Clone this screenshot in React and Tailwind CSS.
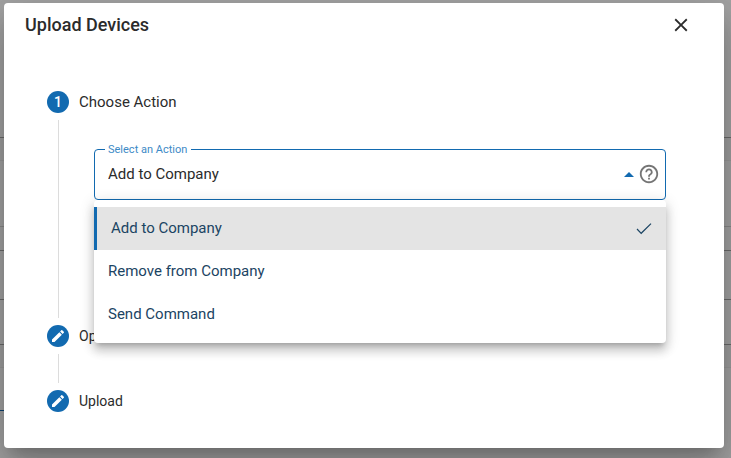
import React, { useState } from 'react';
import { MdClose, MdHelpOutline } from 'react-icons/md';

const ACTIONS = ['Add to Company', 'Remove from Company', 'Send Command'];

const PencilIcon = () => (
  <svg viewBox="0 0 24 24" aria-hidden="true" className="h-4 w-4 fill-current">
    <path d="M3 17.25V21h3.75L17.81 9.94l-3.75-3.75L3 17.25zM20.71 7.04a1 1 0 0 0 0-1.41l-2.34-2.34a1 1 0 0 0-1.41 0l-1.83 1.83 3.75 3.75 1.83-1.83z" />
  </svg>
);

// Dimmed table rows behind the dialog
const PageBehind = () => (
  <div aria-hidden="true" className="min-h-screen bg-[#a4a4a4]">
    <div className="h-[138px] border-b border-[#6b6b6b]" />
    <div className="h-[23px] border-b border-[#9a9a9a] bg-[#a0a0a0]" />
    <div className="h-[66px] border-b border-[#8a8a8a]" />
    <div className="h-6 border-b border-[#6b6b6b]" />
    <div className="h-[49px] border-b border-[#6b6b6b]" />
    <div className="h-[45px] border-b border-[#6b6b6b]" />
    <div className="h-[23px] border-b border-[#9a9a9a] bg-[#a0a0a0]" />
    <div className="h-[43px] w-1/2 border-b border-[#0c4473]" />
  </div>
);

const Step = ({ icon, label, labelClass, children }) => (
  <li>
    <div className="flex h-9 items-center gap-[10px]">
      <span className="flex h-[22px] w-[22px] shrink-0 items-center justify-center rounded-full bg-[#126ab0] text-sm font-medium text-white">
        {icon}
      </span>
      <span className={labelClass}>{label}</span>
    </div>
    {children}
  </li>
);

const ActionSelect = () => {
  const [action, setAction] = useState(ACTIONS[0]);
  const [isOpen, setIsOpen] = useState(true);

  const choose = (value) => {
    setAction(value);
    setIsOpen(false);
  };

  return (
    <div className="relative">
      <fieldset className="rounded border border-[#126ab0] pr-[5px] pb-2 pl-[10px]">
        <legend className="pr-1 pl-[3px] text-[11px] leading-[15px] text-[#3d8ac6]">
          <label htmlFor="action">Select an Action</label>
        </legend>
        <div className="flex h-[34px] items-center gap-1 pl-[3px]">
          <select
            id="action"
            value={action}
            onChange={(e) => choose(e.target.value)}
            className="min-w-0 flex-1 appearance-none bg-transparent text-[15px] text-[#2b2b2b] outline-none"
          >
            {ACTIONS.map((item) => (
              <option key={item}>{item}</option>
            ))}
          </select>
          <button type="button" aria-label="Toggle actions" onClick={() => setIsOpen(!isOpen)}>
            <svg viewBox="0 0 10 5" className="h-[5px] w-[10px] fill-[#126ab0]">
              <path d="M0 5 5 0l5 5z" />
            </svg>
          </button>
          <button type="button" aria-label="Help" className="text-[#757575]">
            <MdHelpOutline className="h-[22px] w-[22px]" />
          </button>
        </div>
      </fieldset>

      {isOpen && (
        <ul
          role="listbox"
          aria-label="Select an Action"
          className="absolute top-full right-0 left-0 z-10 rounded bg-white py-[7px] shadow-[0_5px_5px_-3px_rgba(0,0,0,0.2),0_8px_10px_1px_rgba(0,0,0,0.14),0_3px_14px_2px_rgba(0,0,0,0.12)]"
        >
          {ACTIONS.map((item) => (
            <li key={item} role="option" aria-selected={item === action}>
              <button
                type="button"
                onClick={() => choose(item)}
                className={`flex h-[43px] w-full items-center justify-between px-[14px] text-left text-[15px] text-[#1b4463] ${item === action ? 'border-l-[3px] border-[#126ab0] bg-[#e4e4e4]' : ''}`}
              >
                {item}
                {item === action && (
                  <svg viewBox="0 0 16 12" className="h-3 w-4 fill-none stroke-[#1b4463] stroke-[1.2]">
                    <path d="M1 6 5.2 10.3 15 0.6" />
                  </svg>
                )}
              </button>
            </li>
          ))}
        </ul>
      )}
    </div>
  );
};

const App = () => (
  <div className="relative font-['Roboto',sans-serif]">
    <PageBehind />
    <div className="absolute inset-0 pt-[3px] pr-[7px] pb-[10px] pl-1">
      <section
        role="dialog"
        aria-labelledby="dialog-title"
        className="rounded bg-white text-[#2b2b2b] shadow-[0_11px_15px_-7px_rgba(0,0,0,0.2),0_24px_38px_3px_rgba(0,0,0,0.14),0_9px_46px_8px_rgba(0,0,0,0.12)]"
      >
        <header className="flex h-11 items-center justify-between pr-8 pl-[21px]">
          <h2 id="dialog-title" className="text-lg font-medium">Upload Devices</h2>
          <button type="button" aria-label="Close">
            <MdClose className="h-[22px] w-[22px]" />
          </button>
        </header>

        <ol className="px-[43px] pt-[37px] pb-[29px]">
          <Step icon="1" label="Choose Action" labelClass="text-[15px]">
            <div className="ml-[11px] h-[198px] border-l border-[#dcdcdc] pt-[22px] pr-[15px] pl-[35px]">
              <ActionSelect />
            </div>
          </Step>
          <Step icon={<PencilIcon />} label="Options" labelClass="text-sm">
            <div className="ml-[11px] h-[29px] border-l border-[#dcdcdc]" />
          </Step>
          <Step icon={<PencilIcon />} label="Upload" labelClass="text-sm" />
        </ol>
      </section>
    </div>
  </div>
);

export default App;
